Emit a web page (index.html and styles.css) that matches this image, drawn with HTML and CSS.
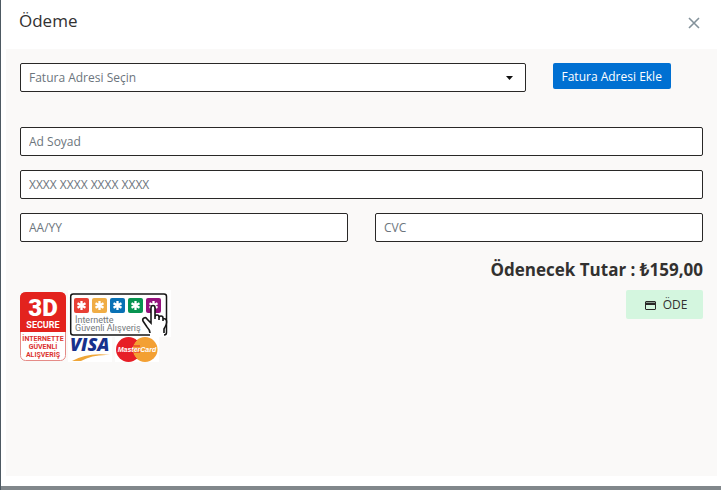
FILE: index.html
```html
<!DOCTYPE html>
<html lang="tr">
<head>
<meta charset="utf-8">
<meta name="viewport" content="width=device-width, initial-scale=1">
<title>Ödeme</title>
<link rel="stylesheet" href="styles.css">
</head>
<body>
<main class="modal">
  <header class="modal-header">
    <h1 class="title">Ödeme</h1>
    <button class="close" type="button" aria-label="Kapat">
      <svg width="12" height="12" viewBox="0 0 12 12"><path d="M1 1l10 10M11 1L1 11" stroke="#84929b" stroke-width="1.6" fill="none"/></svg>
    </button>
  </header>
  <form class="panel">
    <div class="grid address">
      <div class="select-wrap">
        <select class="field" aria-label="Fatura Adresi">
          <option>Fatura Adresi Seçin</option>
        </select>
        <svg class="caret" width="7" height="4" viewBox="0 0 7 4"><path d="M0 0h7L3.5 4z" fill="#111"/></svg>
      </div>
      <div class="add"><button class="btn-add" type="button">Fatura Adresi Ekle</button></div>
    </div>
    <div class="grid fields">
      <input class="field full" type="text" placeholder="Ad Soyad" aria-label="Ad Soyad">
      <input class="field full" type="text" placeholder="XXXX XXXX XXXX XXXX" aria-label="Kart Numarası">
      <input class="field half" type="text" placeholder="AA/YY" aria-label="Son Kullanma Tarihi">
      <input class="field half" type="text" placeholder="CVC" aria-label="CVC">
    </div>
    <p class="total">Ödenecek Tutar : ₺159,00</p>
    <div class="footer">
      <svg class="badges" width="151" height="74" viewBox="0 0 151 74" role="img" aria-label="Güvenli ödeme">
        <defs>
          <g id="star"><path d="M0-4.6V4.6M-4-2.3L4 2.3M4-2.3L-4 2.3" stroke="#fff" stroke-width="2.3"/></g>
        </defs>
        <rect x="0.5" y="2.5" width="45" height="68" rx="5" fill="#fff" stroke="#e58b87"/>
        <path d="M0 42V8q0-6 6-6h34q6 0 6 6v34z" fill="#e3231e"/>
        <text class="b-3d" x="23" y="26" text-anchor="middle">3D</text>
        <text class="b-secure" x="23" y="38" text-anchor="middle">SECURE</text>
        <g class="b-small" text-anchor="middle">
          <text x="23" y="51">İNTERNETTE</text>
          <text x="23" y="59">GÜVENLİ</text>
          <text x="23" y="67">ALIŞVERİŞ</text>
        </g>
        <rect x="48" width="103" height="47" fill="#fff"/>
        <rect x="50.7" y="4" width="95.8" height="41" rx="2.5" fill="#fff" stroke="#161616" stroke-width="1.5"/>
        <rect x="54" y="8" width="15" height="15" rx="2" fill="#e84035"/>
        <rect x="72" y="8" width="15" height="15" rx="2" fill="#f0ad45"/>
        <rect x="90" y="8" width="15" height="15" rx="2" fill="#0871b5"/>
        <rect x="108" y="8" width="15" height="15" rx="2" fill="#079451"/>
        <rect x="126" y="8" width="15" height="15" rx="2" fill="#94117d"/>
        <use href="#star" x="61.5" y="15.5"/><use href="#star" x="79.5" y="15.5"/><use href="#star" x="97.5" y="15.5"/><use href="#star" x="115.5" y="15.5"/><use href="#star" x="133.5" y="15.5"/>
        <text class="b-grey" x="55" y="33">İnternette</text>
        <text class="b-grey" x="55" y="41">Güvenli Alışveriş</text>
        <path d="M130 46v-3q0-3-3-6l-4-6q-1-2 1-3t3 1l4 4V18q0-2.500 2-2.500t2 2.500v9q0-2 2-2t2 3q0-2 2-2t2 3q3-1 3.500 2t-2.500 8v7z" fill="#fff"/>
        <path d="M130 43q0-3-3-6l-4-6q-1-2 1-3t3 1l4 4V18q0-2.500 2-2.500t2 2.500v11M135 27q0-2 2-2t2 2v3M139 28q0-2 2-2t2 2v3M143 29q3-1 3.500 2t-2.500 8v4" fill="none" stroke="#161616" stroke-width="1.6"/>
        <path d="M48 47h44v25H48zM95 47h44v25H95z" fill="#fff"/>
        <text class="b-visa" x="50" y="61">VISA</text>
        <path d="M52 71q16-9 38-6-17-1-29 6z" fill="#efa638"/>
        <circle cx="108.500" cy="59.500" r="12.500" fill="#e71e26"/>
        <circle cx="125" cy="59.500" r="12.500" fill="#f3a033"/>
        <path d="M116.700 50.100a12.500 12.500 0 0 0 0 18.800M114 56h6M113 59h7M114 62h6" stroke="#e71e26" fill="none"/>
        <text class="b-master" x="117" y="62" text-anchor="middle">MasterCard</text>
      </svg>
      <button class="btn-pay" type="button">
        <svg width="11" height="9" viewBox="0 0 11 9"><path d="M1 0h9l1 1v7l-1 1H1L0 8V1zM1 4v4h9V4z" fill="#292827" fill-rule="evenodd"/><path d="M1 1.500h9" stroke="#8a9a8f"/></svg>
        ÖDE
      </button>
    </div>
  </form>
</main>
</body>
</html>
```
FILE: styles.css
```css
* { box-sizing: border-box; }
body {
  margin: 0;
  min-height: 100vh;
  display: flex;
  padding: 0 0 4px 1px;
  background: linear-gradient(90deg, #4d5962 1px, #81878b 1px);
  color: #323130;
  font: 12px/18px "Open Sans", "Noto Sans", sans-serif;
}
button, input, select { font: inherit; color: inherit; margin: 0; }
.modal {
  flex: 1;
  display: flex;
  flex-direction: column;
  background: #fff;
  padding: 0 4px 10px 5px;
}
.modal-header {
  display: flex;
  justify-content: space-between;
  align-items: flex-start;
  height: 49px;
  padding: 9px 17px 0 13px;
}
.title { margin: 0; font-size: 17px; line-height: 24px; font-weight: 400; }
.close { display: flex; padding: 0; margin-top: 8px; border: 0; background: none; }
.panel { flex: 1; padding: 14px 14px 0; background: #faf9f8; }
.grid { display: grid; grid-template-columns: repeat(12, 1fr); column-gap: 27px; row-gap: 14px; }
.address { margin-bottom: 35px; }
.select-wrap { grid-column: span 9; position: relative; }
.add { grid-column: span 3; }
.full { grid-column: span 12; }
.half { grid-column: span 6; }
.field {
  display: block;
  width: 100%;
  min-width: 0;
  height: 29px;
  padding: 0 8px;
  border: 1px solid #292827;
  border-radius: 2px;
  background: #fff;
  appearance: none;
}
select.field { color: #6c757d; }
.field::placeholder { color: #6c757d; opacity: 1; }
.caret { position: absolute; right: 13px; top: 13px; }
.btn-add {
  display: block;
  height: 26px;
  padding: 2px 9px 0;
  border: 0;
  border-radius: 2px;
  background: #0070d2;
  color: #fff;
  white-space: nowrap;
}
.total { margin: 15px 0 8px; font-size: 17px; line-height: 25px; font-weight: 700; text-align: right; }
.footer { display: flex; justify-content: space-between; align-items: flex-start; }
.btn-pay {
  display: flex;
  align-items: center;
  justify-content: center;
  gap: 7px;
  width: 77px;
  height: 29px;
  padding: 1px 0 0 3px;
  border: 0;
  border-radius: 2px;
  background: #d4f6df;
}
.b-3d { font: 900 24px "Roboto", sans-serif; fill: #fff; }
.b-secure { font: 700 9px "Roboto", sans-serif; fill: #fff; }
.b-small { font: 700 7px "Roboto", sans-serif; fill: #dc332f; }
.b-grey { font: 9px "Roboto", sans-serif; fill: #73777a; }
.b-visa { font: italic 800 18px "Open Sans", sans-serif; fill: #17318c; }
.b-master { font: italic 700 7px "Liberation Sans", sans-serif; fill: #fff; }
```
